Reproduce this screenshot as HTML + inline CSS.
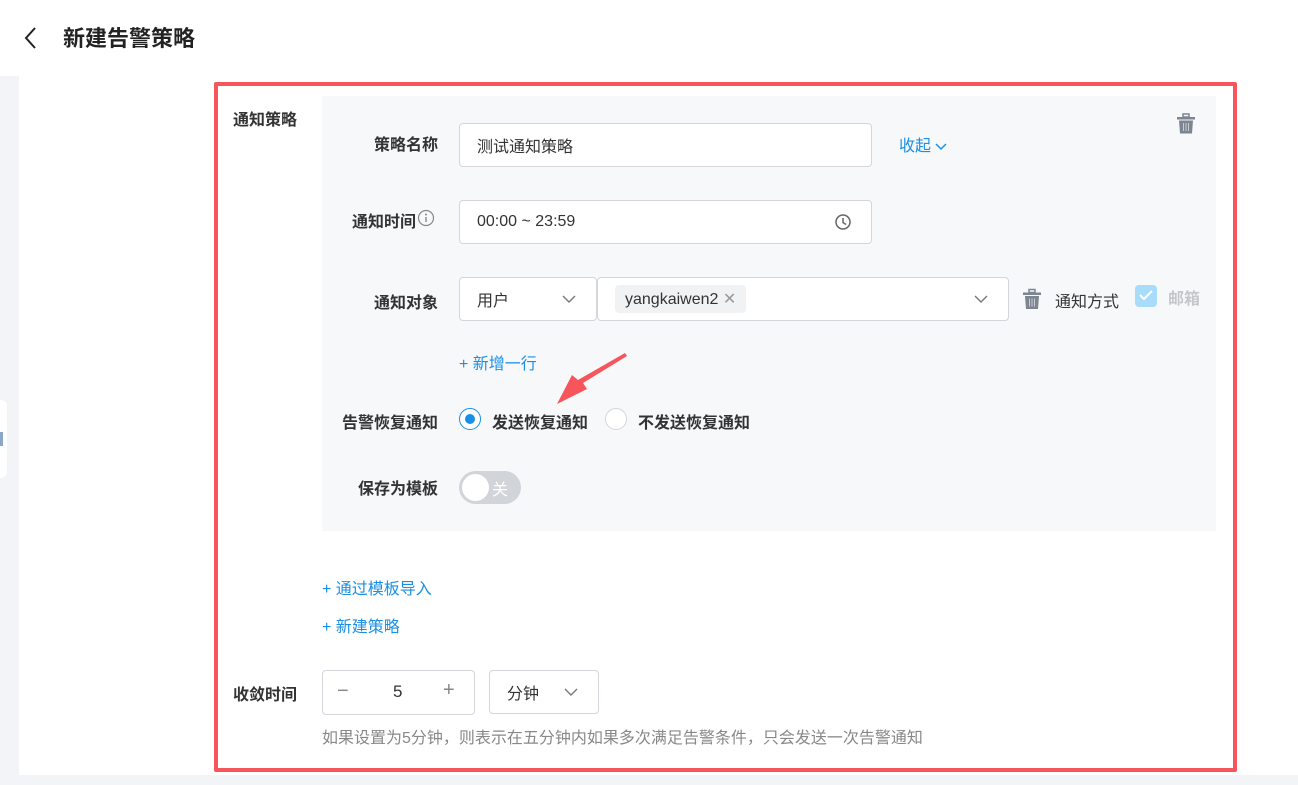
<!DOCTYPE html>
<html><head><meta charset="utf-8"><style>
*{box-sizing:border-box;margin:0;padding:0}
body{width:1298px;height:785px;overflow:hidden;background:#f3f4f8;font-family:"Liberation Sans","Noto Sans CJK SC",sans-serif;position:relative;color:#333}
.abs{position:absolute}
.hdr{left:0;top:0;width:1298px;height:76px;background:#fff}
.title{left:63px;top:21px;font-size:22px;font-weight:bold;color:#222}
.main{left:19px;top:76px;width:1279px;height:699px;background:#fff}
.tab{left:0;top:400px;width:7px;height:78px;background:#fff;border-radius:0 6px 6px 0}
.red{left:214px;top:82px;width:1023px;height:690px;border:4px solid #f5555b;border-radius:2px}
.panel{left:322px;top:96px;width:894px;height:435px;background:#f7f8fa}
.lbl{font-size:16px;font-weight:bold;color:#333;text-align:right;width:120px}
.inp{background:#fff;border:1px solid #d3d6db;border-radius:4px;font-size:16px;color:#333;padding-left:17px;display:flex;align-items:center}
.blue{color:#1a8fe6;font-size:16px}
</style></head><body>
<div class="abs hdr"></div>
<svg class="abs" style="left:22px;top:26px" width="16" height="24"><path d="M13 2 L4 12 L13 22" stroke="#222" stroke-width="2" fill="none"/></svg>
<div class="abs title">新建告警策略</div>
<div class="abs main"></div>
<div class="abs tab"></div>
<div class="abs" style="left:0;top:432px;width:3px;height:14px;background:#8aa6c8"></div>
<div class="abs panel"></div>
<div class="abs red"></div>
<div class="abs" style="left:233px;top:106px;font-size:16px;font-weight:bold">通知策略</div>
<svg class="abs" style="left:1176px;top:113px" width="20" height="21" viewBox="0 0 20 21"><rect x="7" y="1" width="6" height="3" fill="none" stroke="#7d8590" stroke-width="1.5"/><rect x="1" y="4" width="18" height="2.5" fill="#7d8590"/><path d="M3 7.5h14l-1 13H4z" fill="#7d8590"/><path d="M7.5 10v8M10 10v8M12.5 10v8" stroke="#c9ccd2" stroke-width="1"/></svg>

<div class="abs lbl" style="left:318px;top:131px">策略名称</div>
<div class="abs inp" style="left:459px;top:123px;width:413px;height:44px">测试通知策略</div>
<div class="abs blue" style="left:899px;top:132px">收起 <svg width="12" height="8"><path d="M1 1l5 5 5-5" stroke="#1a8fe6" stroke-width="1.5" fill="none"/></svg></div>

<div class="abs lbl" style="left:296px;top:208px">通知时间</div>
<svg class="abs" style="left:417px;top:209px" width="18" height="18"><circle cx="9" cy="9" r="7.5" fill="none" stroke="#888" stroke-width="1.2"/><path d="M9 8v5" stroke="#888" stroke-width="1.4"/><circle cx="9" cy="5.5" r="1" fill="#888"/></svg>
<div class="abs inp" style="left:459px;top:200px;width:413px;height:44px">00:00 ~ 23:59</div>
<svg class="abs" style="left:834px;top:213px" width="18" height="18"><circle cx="9" cy="9" r="7" fill="none" stroke="#666" stroke-width="1.5"/><path d="M9 5v4.5l3 2" stroke="#666" stroke-width="1.5" fill="none"/></svg>

<div class="abs lbl" style="left:318px;top:289px">通知对象</div>
<div class="abs inp" style="left:459px;top:277px;width:138px;height:44px">用户</div>
<svg class="abs" style="left:562px;top:295px" width="14" height="9"><path d="M1 1l6 6 6-6" stroke="#777" stroke-width="1.4" fill="none"/></svg>
<div class="abs inp" style="left:597px;top:277px;width:412px;height:44px;padding-left:17px"><span style="background:#f1f2f4;border-radius:4px;padding:4px 10px;font-size:16px;color:#333">yangkaiwen2 <span style="color:#999">✕</span></span></div>
<svg class="abs" style="left:974px;top:295px" width="14" height="9"><path d="M1 1l6 6 6-6" stroke="#777" stroke-width="1.4" fill="none"/></svg>
<svg class="abs" style="left:1022px;top:288px" width="20" height="22" viewBox="0 0 20 21"><rect x="7" y="1" width="6" height="3" fill="none" stroke="#7d8590" stroke-width="1.5"/><rect x="1" y="4" width="18" height="2.5" fill="#7d8590"/><path d="M3 7.5h14l-1 13H4z" fill="#7d8590"/><path d="M7.5 10v8M10 10v8M12.5 10v8" stroke="#c9ccd2" stroke-width="1"/></svg>
<div class="abs" style="left:1055px;top:288px;font-size:16px;color:#333">通知方式</div>
<div class="abs" style="left:1135px;top:285px;width:22px;height:22px;background:#a9dbfa;border-radius:4px"></div>
<svg class="abs" style="left:1138px;top:289px" width="16" height="13"><path d="M2 6l4 4 8-8" stroke="#fff" stroke-width="2" fill="none"/></svg>
<div class="abs" style="left:1168px;top:285px;font-size:16px;font-weight:bold;color:#c4c6ca">邮箱</div>

<div class="abs blue" style="left:459px;top:350px">+ 新增一行</div>
<svg class="abs" style="left:550px;top:352px" width="82" height="56"><path d="M77 4 L33 31 L37 37 L7 52 L22 23 L28 28 L75 1 Z" fill="#f5555b"/></svg>

<div class="abs lbl" style="left:318px;top:409px">告警恢复通知</div>
<div class="abs" style="left:459px;top:408px;width:22px;height:22px;border:1.5px solid #1a8fe6;border-radius:50%;background:#fff"></div>
<div class="abs" style="left:465px;top:414px;width:10px;height:10px;border-radius:50%;background:#1a8fe6"></div>
<div class="abs" style="left:492px;top:409px;font-size:16px;font-weight:bold">发送恢复通知</div>
<div class="abs" style="left:605px;top:408px;width:22px;height:22px;border:1px solid #d3d6db;border-radius:50%;background:#fff"></div>
<div class="abs" style="left:638px;top:409px;font-size:16px;font-weight:bold">不发送恢复通知</div>

<div class="abs lbl" style="left:318px;top:475px">保存为模板</div>
<div class="abs" style="left:459px;top:471px;width:62px;height:33px;border-radius:17px;background:#d1d4d8"></div>
<div class="abs" style="left:462px;top:474px;width:27px;height:27px;border-radius:50%;background:#fff"></div>
<div class="abs" style="left:492px;top:476px;font-size:16px;color:#fff">关</div>

<div class="abs blue" style="left:322px;top:575px">+ 通过模板导入</div>
<div class="abs blue" style="left:322px;top:613px">+ 新建策略</div>

<div class="abs" style="left:233px;top:681px;font-size:16px;font-weight:bold">收敛时间</div>
<div class="abs" style="left:322px;top:670px;width:153px;height:45px;background:#fff;border:1px solid #d3d6db;border-radius:4px"></div>
<div class="abs" style="left:337px;top:680px;font-size:20px;color:#888">−</div>
<div class="abs" style="left:393px;top:682px;font-size:17px;color:#333">5</div>
<div class="abs" style="left:443px;top:679px;font-size:20px;color:#888">+</div>
<div class="abs inp" style="left:489px;top:670px;width:110px;height:44px">分钟</div>
<svg class="abs" style="left:564px;top:688px" width="14" height="9"><path d="M1 1l6 6 6-6" stroke="#777" stroke-width="1.4" fill="none"/></svg>
<div class="abs" style="left:322px;top:724px;font-size:16px;color:#888">如果设置为5分钟，则表示在五分钟内如果多次满足告警条件，只会发送一次告警通知</div>
</body></html>
